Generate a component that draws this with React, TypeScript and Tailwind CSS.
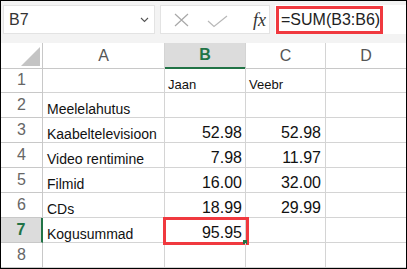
import React from 'react';

type Row = {
  n: number;
  a?: string;
  b?: string;
  c?: string;
  head?: boolean;
};

const rows: Row[] = [
  { n: 1, b: 'Jaan', c: 'Veebr', head: true },
  { n: 2, a: 'Meelelahutus' },
  { n: 3, a: 'Kaabeltelevisioon', b: '52.98', c: '52.98' },
  { n: 4, a: 'Video rentimine', b: '7.98', c: '11.97' },
  { n: 5, a: 'Filmid', b: '16.00', c: '32.00' },
  { n: 6, a: 'CDs', b: '18.99', c: '29.99' },
  { n: 7, a: 'Kogusummad', b: '95.95' },
  { n: 8 },
];

function Toolbar() {
  return (
    <div className="h-[42px] bg-[#f3f3f3] flex items-start pt-[4px] pl-[2px] gap-[5px]">
      {/* name box */}
      <div className="w-[152px] h-[29px] bg-white border border-[#e3e3e3] flex items-center justify-between pl-[5px] pr-[5px]">
        <span className="text-[16px] text-[#333] leading-none">B7</span>
        <svg width="9" height="6" viewBox="0 0 9 6" className="mt-[1px]">
          <path d="M1 1 L4.5 4.5 L8 1" fill="none" stroke="#555" strokeWidth="1.1" />
        </svg>
      </div>

      {/* cancel / enter / fx */}
      <div className="w-[110px] h-[29px] bg-white border border-[#e3e3e3] flex items-center pl-[13px]">
        <svg width="15" height="14" viewBox="0 0 15 14">
          <path d="M1 1 L14 13 M14 1 L1 13" stroke="#a8a8a8" strokeWidth="1.2" fill="none" />
        </svg>
        <svg width="21" height="13" viewBox="0 0 21 13" className="ml-[18px] mt-[3px]">
          <path d="M1 6 L7 11.5 L20 1" stroke="#b8b8b8" strokeWidth="1.2" fill="none" />
        </svg>
        <span className="ml-[25px] text-[18px] italic text-[#333] leading-none font-['Liberation_Serif',serif]">
          fx
        </span>
      </div>

      {/* formula input */}
      <div className="flex-1 h-[29px] bg-white pl-[1px] pt-[1px]">
        <div className="w-[107px] h-[28px] border-[3px] border-[#f0393f] flex items-center pl-[2px]">
          <span className="text-[16px] text-[#222] leading-none">=SUM(B3:B6)</span>
        </div>
      </div>
    </div>
  );
}

function HeaderRow() {
  return (
    <div className="grid grid-cols-[42px_122px_81px_80px_1fr] h-[25px]">
      <div className="border-r border-b border-[#c8c8c8] flex items-end justify-end pr-[2px] pb-[2px]">
        <svg width="19" height="19" viewBox="0 0 19 19">
          <polygon points="19,0 19,19 0,19" fill="#c4c4c4" />
        </svg>
      </div>
      <div className="border-r border-b border-[#d4d4d4] border-b-[#c8c8c8] flex items-center justify-center text-[16px] text-[#555]">
        A
      </div>
      <div className="border-r border-[#d4d4d4] border-b-2 border-b-[#217346] bg-[#dcdcdc] flex items-center justify-center text-[16px] font-bold text-[#217346]">
        B
      </div>
      <div className="border-r border-b border-[#d4d4d4] border-b-[#c8c8c8] flex items-center justify-center text-[16px] text-[#555]">
        C
      </div>
      <div className="border-b border-[#c8c8c8] flex items-center justify-center text-[16px] text-[#555]">
        D
      </div>
    </div>
  );
}

function DataRow({ row }: { row: Row }) {
  const selected = row.n === 7;
  const numCls = 'text-[16px] leading-[18px] text-[#111]';
  const smallCls = 'text-[13px] leading-[15px] text-[#111]';
  return (
    <div className="grid grid-cols-[42px_122px_81px_80px_1fr] h-[25px]">
      <div
        className={
          selected
            ? 'bg-[#dcdcdc] border-b border-[#c8c8c8] border-r-2 border-r-[#217346] flex items-center justify-center text-[16px] font-bold text-[#217346]'
            : 'border-r border-b border-[#c8c8c8] flex items-center justify-center text-[16px] text-[#666]'
        }
      >
        {row.n}
      </div>
      <div className="border-r border-b border-[#d4d4d4] flex items-end pl-[4px]">
        <span className="text-[14px] leading-4 text-[#111] whitespace-nowrap">{row.a}</span>
      </div>
      <div
        className={
          'relative border-r border-b border-[#d4d4d4] flex items-end ' +
          (row.head ? 'justify-start pl-[3px]' : 'justify-end pr-[3px]')
        }
      >
        <span className={row.head ? smallCls : numCls}>{row.b}</span>
        {selected && (
          <>
            <div className="absolute -left-[2px] -top-[1px] w-[86px] h-[28px] border-[3px] border-[#f0393f]" />
            <div className="absolute right-[-2px] bottom-[-2px] w-[4px] h-[4px] bg-[#217346]" />
          </>
        )}
      </div>
      <div
        className={
          'border-r border-b border-[#d4d4d4] flex items-end ' +
          (row.head ? 'justify-start pl-[3px]' : 'justify-end pr-[4px]')
        }
      >
        <span className={row.head ? smallCls : numCls}>{row.c}</span>
      </div>
      <div className="border-b border-[#d4d4d4]" />
    </div>
  );
}

export default function App() {
  return (
    <div className="w-[407px] h-[269px] border border-black bg-white overflow-hidden font-['Liberation_Sans',Arial,sans-serif]">
      <Toolbar />
      <HeaderRow />
      {rows.map((r) => (
        <DataRow key={r.n} row={r} />
      ))}
    </div>
  );
}
